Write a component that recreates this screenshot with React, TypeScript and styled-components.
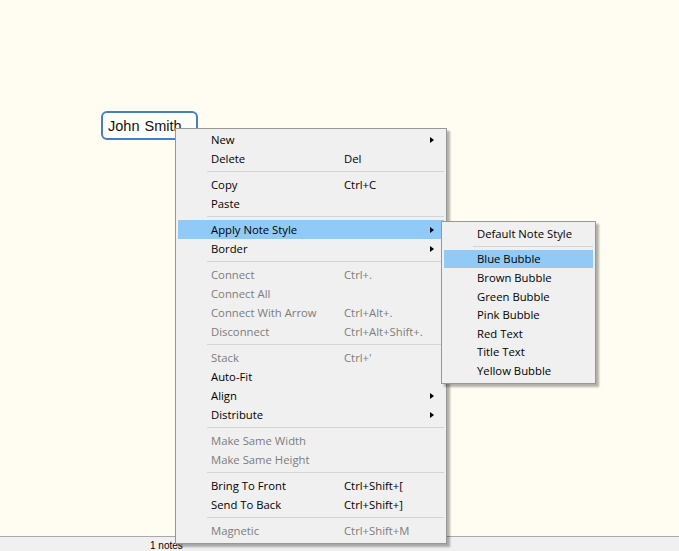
import React from "react";
import styled, { createGlobalStyle } from "styled-components";

const Global = createGlobalStyle`
  html, body { margin: 0; padding: 0; }
  body { width: 679px; height: 551px; overflow: hidden; background: #fffdf1; }
  #root { height: 100%; }
`;

const Page = styled.div`
  display: flex;
  flex-direction: column;
  width: 679px;
  height: 551px;
  font-family: "Open Sans", "Noto Sans", sans-serif;
`;

const Canvas = styled.div`
  position: relative;
  flex: 1;
  background: #fffdf1;
`;

const StatusBar = styled.div`
  height: 14px;
  border-top: 1px solid #a9a9a9;
  background: #f0f0f0;
  display: flex;
  align-items: flex-end;
  padding-left: 150px;
  font-family: "Liberation Sans", Arial, sans-serif;
  font-size: 10px;
  line-height: 11px;
  color: #000;
`;

const Note = styled.div`
  position: absolute;
  left: 101px;
  top: 111px;
  width: 97px;
  height: 29px;
  box-sizing: border-box;
  border: 2.5px solid #4a7cc4;
  border-radius: 6px;
  background: #fffffa;
  display: flex;
  align-items: center;
  padding-left: 5px;
  font-family: "Liberation Sans", Arial, sans-serif;
  font-size: 14.5px;
  word-spacing: 1px;
  color: #111;
`;

const Menu = styled.div<{ $left: number; $top: number; $width: number; $padTop: number }>`
  position: absolute;
  left: ${(p) => p.$left}px;
  top: ${(p) => p.$top}px;
  width: ${(p) => p.$width}px;
  box-sizing: border-box;
  background: #f0f0f0;
  border: 1px solid #979797;
  padding: ${(p) => p.$padTop}px 2px 3px 2px;
  box-shadow: 3px 3px 2px rgba(0, 0, 0, 0.3);
  display: flex;
  flex-direction: column;
  z-index: 1;
`;

const Row = styled.div<{ $active?: boolean; $disabled?: boolean; $textLeft: number; $h: number }>`
  position: relative;
  height: ${(p) => p.$h}px;
  display: grid;
  grid-template-columns: ${(p) => p.$textLeft}px 133px 1fr 14px;
  align-items: center;
  background: ${(p) => (p.$active ? "#91c9f7" : "transparent")};
  color: ${(p) => (p.$disabled ? "#7c7c7c" : "#000")};
  font-size: 11.3px;
  white-space: nowrap;
`;

const Label = styled.span`
  grid-column: 2;
`;

const Shortcut = styled.span`
  grid-column: 3;
`;

const Arrow = styled.span`
  grid-column: 4;
  width: 0;
  height: 0;
  border-top: 3.5px solid transparent;
  border-bottom: 3.5px solid transparent;
  border-left: 4px solid #000;
  justify-self: start;
`;

const Separator = styled.div<{ $left: number }>`
  height: 7px;
  display: flex;
  align-items: center;
  padding-left: ${(p) => p.$left}px;
  &::after {
    content: "";
    flex: 1;
    height: 1px;
    background: #d4d4d4;
  }
`;

type Item =
  | { sep: true }
  | { sep?: false; label: string; shortcut?: string; sub?: boolean; disabled?: boolean; active?: boolean };

const mainItems: Item[] = [
  { label: "New", sub: true },
  { label: "Delete", shortcut: "Del" },
  { sep: true },
  { label: "Copy", shortcut: "Ctrl+C" },
  { label: "Paste" },
  { sep: true },
  { label: "Apply Note Style", sub: true, active: true },
  { label: "Border", sub: true },
  { sep: true },
  { label: "Connect", shortcut: "Ctrl+.", disabled: true },
  { label: "Connect All", disabled: true },
  { label: "Connect With Arrow", shortcut: "Ctrl+Alt+.", disabled: true },
  { label: "Disconnect", shortcut: "Ctrl+Alt+Shift+.", disabled: true },
  { sep: true },
  { label: "Stack", shortcut: "Ctrl+'", disabled: true },
  { label: "Auto-Fit" },
  { label: "Align", sub: true },
  { label: "Distribute", sub: true },
  { sep: true },
  { label: "Make Same Width", disabled: true },
  { label: "Make Same Height", disabled: true },
  { sep: true },
  { label: "Bring To Front", shortcut: "Ctrl+Shift+[" },
  { label: "Send To Back", shortcut: "Ctrl+Shift+]" },
  { sep: true },
  { label: "Magnetic", shortcut: "Ctrl+Shift+M", disabled: true },
];

const subItems: Item[] = [
  { label: "Default Note Style" },
  { sep: true },
  { label: "Blue Bubble", active: true },
  { label: "Brown Bubble" },
  { label: "Green Bubble" },
  { label: "Pink Bubble" },
  { label: "Red Text" },
  { label: "Title Text" },
  { label: "Yellow Bubble" },
];

function MenuList({
  items,
  textLeft,
  sepLeft,
  rowH,
}: {
  items: Item[];
  textLeft: number;
  sepLeft: number;
  rowH: number;
}) {
  return (
    <>
      {items.map((it, i) =>
        it.sep ? (
          <Separator key={i} $left={sepLeft} />
        ) : (
          <Row key={i} $active={it.active} $disabled={it.disabled} $textLeft={textLeft} $h={rowH}>
            <Label>{it.label}</Label>
            {it.shortcut && <Shortcut>{it.shortcut}</Shortcut>}
            {it.sub && <Arrow />}
          </Row>
        )
      )}
    </>
  );
}

export default function App() {
  return (
    <Page>
      <Global />
      <Canvas>
        <Note>John Smith</Note>
        <Menu $left={175} $top={128} $width={272} $padTop={1}>
          <MenuList items={mainItems} textLeft={33} sepLeft={29} rowH={19} />
        </Menu>
        <Menu $left={441} $top={221} $width={155} $padTop={2}>
          <MenuList items={subItems} textLeft={33} sepLeft={29} rowH={18.6} />
        </Menu>
      </Canvas>
      <StatusBar>1 notes</StatusBar>
    </Page>
  );
}
